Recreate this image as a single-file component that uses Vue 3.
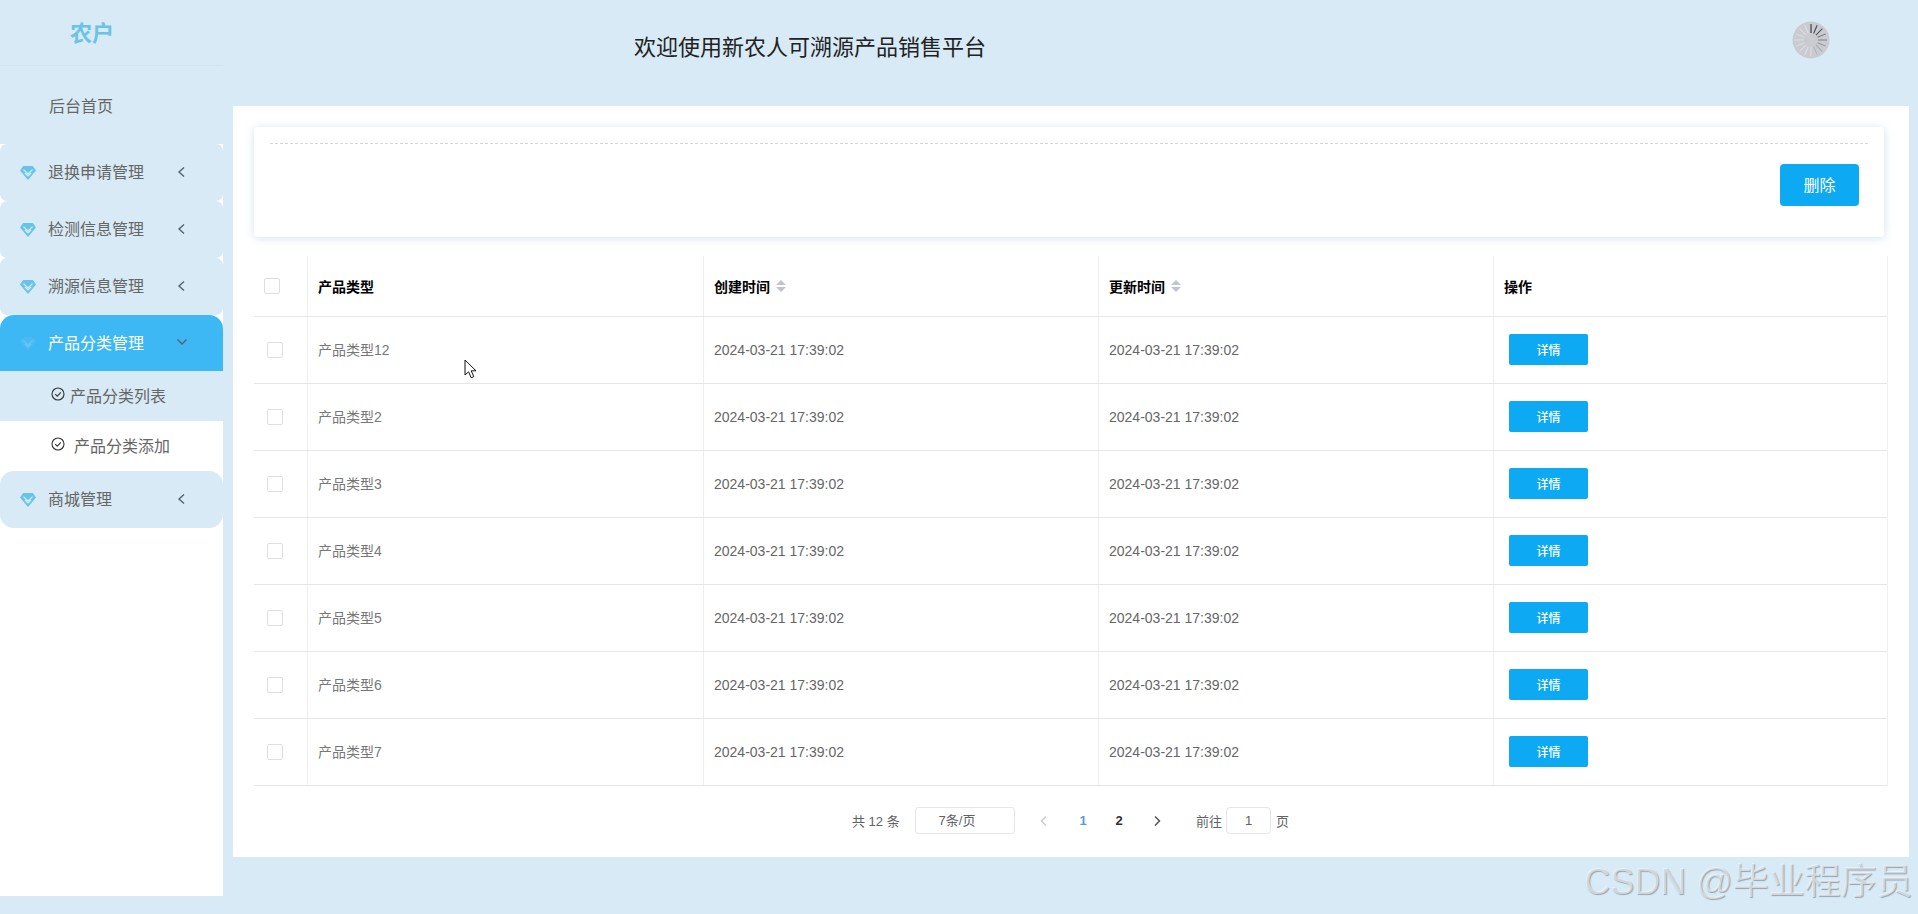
<template>
  <div class="page">
    <aside class="sidebar">
      <div class="logo">农户</div>
      <div class="home">后台首页</div>
      <ul class="menu">
        <template v-for="item in menus" :key="item.name">
          <li class="menu-item" :class="{ active: item.open }">
            <svg class="gem" viewBox="0 0 16 15">
              <path d="M3.2 1h9.6L16 5.6 8 15 0 5.6z" fill="#66c4e6" />
              <path d="M3.4 4.6L8 9l4.6-4.4M5 8l3 3 3-3" fill="none" stroke="#d7eaf6" stroke-width="1.2" />
            </svg>
            <span class="menu-name">{{ item.name }}</span>
            <svg class="arrow" viewBox="0 0 12 12">
              <path :d="item.open ? 'M1.5 3.5L6 8l4.5-4.5' : 'M8 1.5L3 6l5 4.5'" fill="none" stroke="#55606e" stroke-width="1.4" />
            </svg>
          </li>
          <template v-if="item.open">
            <li class="sub-item current">
              <svg class="check" viewBox="0 0 14 14">
                <circle cx="7" cy="7" r="6" fill="none" stroke="#333" stroke-width="1.1" />
                <path d="M4.2 7.2l2.1 2 3.5-3.8" fill="none" stroke="#333" stroke-width="1.1" />
              </svg>
              <span class="sub-name">产品分类列表</span>
            </li>
            <li class="sub-item">
              <svg class="check" viewBox="0 0 14 14">
                <circle cx="7" cy="7" r="6" fill="none" stroke="#333" stroke-width="1.1" />
                <path d="M4.2 7.2l2.1 2 3.5-3.8" fill="none" stroke="#333" stroke-width="1.1" />
              </svg>
              <span class="sub-name add-name">产品分类添加</span>
            </li>
          </template>
        </template>
      </ul>
    </aside>

    <main class="main">
      <header class="top">
        <h1 class="title">欢迎使用新农人可溯源产品销售平台</h1>
        <svg class="avatar" viewBox="0 0 38 38">
          <circle cx="19" cy="19" r="18.5" fill="#c9cbd0" />
          <line v-for="t in ticks" :key="t.deg" x1="19" y1="3" x2="19" y2="12"
            :stroke="t.color" stroke-width="1" :transform="`rotate(${t.deg} 19 19)`" />
        </svg>
      </header>

      <section class="panel">
        <div class="card">
          <div class="dash"></div>
          <div class="card-actions">
            <button class="del-btn">删除</button>
          </div>
        </div>

        <div class="table">
          <div class="row head">
            <div class="cell box-cell"><span class="box"></span></div>
            <div class="cell">产品类型</div>
            <div class="cell">创建时间<span class="sort"><i class="up"></i><i class="down"></i></span></div>
            <div class="cell">更新时间<span class="sort"><i class="up"></i><i class="down"></i></span></div>
            <div class="cell">操作</div>
          </div>
          <div class="row" v-for="name in rows" :key="name">
            <div class="cell box-cell"><span class="box"></span></div>
            <div class="cell name-cell">{{ name }}</div>
            <div class="cell">2024-03-21 17:39:02</div>
            <div class="cell">2024-03-21 17:39:02</div>
            <div class="cell"><button class="detail-btn">详情</button></div>
          </div>
        </div>

        <div class="pager">
          <span class="total">共 12 条</span>
          <span class="size">7条/页</span>
          <svg class="page-arrow prev" viewBox="0 0 10 12"><path d="M7 1.5L2.5 6 7 10.5" fill="none" stroke="#c8ccd2" stroke-width="1.5" /></svg>
          <span class="num on">1</span>
          <span class="num">2</span>
          <svg class="page-arrow next" viewBox="0 0 10 12"><path d="M3 1.5L7.5 6 3 10.5" fill="none" stroke="#555" stroke-width="1.5" /></svg>
          <span class="goto">前往</span>
          <span class="jump">1</span>
          <span class="unit">页</span>
        </div>
      </section>
    </main>

    <svg class="cursor" viewBox="0 0 13 20">
      <path d="M1 1v15l3.6-3.2 2.6 6 2.6-1.2-2.6-5.8h4.8z" fill="#fff" stroke="#111" stroke-width="1" />
    </svg>
    <div class="watermark">CSDN @毕业程序员</div>
  </div>
</template>

<script setup>
const menus = [
  { name: '退换申请管理' },
  { name: '检测信息管理' },
  { name: '溯源信息管理' },
  { name: '产品分类管理', open: true },
  { name: '商城管理' }
]

const rows = ['产品类型12', '产品类型2', '产品类型3', '产品类型4', '产品类型5', '产品类型6', '产品类型7']

const shades = ['#23272e', '#3a3f48', '#4a4f58', '#6f747c', '#7c8088', '#8f9399', '#a5a8ad', '#b4b6ba']
const ticks = Array.from({ length: 16 }, (_, i) => ({
  deg: i * 22.5,
  color: shades[i] || '#dcdee2'
}))
</script>

<style>
html,
body {
  margin: 0;
  background: #d7eaf6;
}
</style>

<style scoped>
.page {
  position: relative;
  display: flex;
  width: 1918px;
  height: 914px;
  overflow: hidden;
  background: #d7eaf6;
  font-family: "Liberation Sans", "Noto Sans CJK SC", sans-serif;
  color: #666;
}

.sidebar {
  display: flex;
  flex-direction: column;
  width: 223px;
  height: 896px;
  background: #fff;
}

.logo {
  height: 66px;
  line-height: 67px;
  padding-right: 39px;
  text-align: center;
  font-size: 22px;
  font-weight: 700;
  color: #6cc3e4;
  background: #d7eaf6;
  border-bottom: 1px solid #d2e6f2;
  box-sizing: border-box;
}

.home {
  height: 78px;
  line-height: 82px;
  padding-left: 49px;
  font-size: 16px;
  background: #d7eaf6;
}

.menu {
  margin: 0;
  padding: 0;
  list-style: none;
}

.menu-item {
  display: flex;
  align-items: center;
  height: 57px;
  padding-left: 20px;
  font-size: 16px;
  background: #d7eaf6;
  border-radius: 7px;
  box-sizing: border-box;
}

.menu-item:last-child {
  border-radius: 14px;
}

.menu-item.active {
  height: 56px;
  color: #fff;
  background: #3db8f5;
  border-radius: 14px 14px 0 0;
}

.gem {
  width: 16px;
  height: 15px;
  margin-right: 12px;
}

.active .gem {
  opacity: 0.3;
}

.menu-name {
  width: 128px;
  padding-bottom: 3px;
}

.arrow {
  width: 12px;
  height: 12px;
  margin-top: -2px;
}

.sub-item {
  display: flex;
  align-items: center;
  height: 50px;
  padding-left: 51px;
  font-size: 16px;
  background: #fff;
  box-sizing: border-box;
}

.sub-item.current {
  background: #d7eaf6;
}

.sub-name {
  padding-bottom: 2px;
}

.check {
  width: 14px;
  height: 14px;
  margin-right: 5px;
  margin-top: -4px;
}

.add-name {
  margin-left: 4px;
}

.main {
  flex: 1;
  min-width: 0;
}

.top {
  display: flex;
  align-items: center;
  height: 106px;
  padding-bottom: 16px;
  box-sizing: border-box;
}

.title {
  margin: 0 0 0 411px;
  font-size: 22px;
  font-weight: 400;
  color: #222;
  white-space: nowrap;
}

.avatar {
  width: 38px;
  height: 38px;
  margin-left: 806px;
  margin-top: -10px;
}

.panel {
  width: 1676px;
  height: 751px;
  margin-left: 10px;
  padding: 21px 21px 0;
  background: #fff;
  box-sizing: border-box;
}

.card {
  width: 1630px;
  height: 110px;
  padding: 16px 16px 0;
  border-radius: 4px;
  background: #fff;
  box-shadow: 0 1px 8px rgba(130, 170, 195, 0.35);
  box-sizing: border-box;
}

.dash {
  border-top: 1px dashed #d4d6da;
}

.card-actions {
  display: flex;
  justify-content: flex-end;
  padding: 20px 9px 0 0;
}

.del-btn {
  width: 79px;
  height: 42px;
  padding: 0 0 3px;
  border: 0;
  border-radius: 4px;
  background: #0ea9f3;
  color: #fff;
  font-family: inherit;
  font-size: 16px;
}

.table {
  width: 1634px;
  margin-top: 19px;
  border-right: 1px solid #eef0f3;
  box-sizing: border-box;
}

.row {
  display: grid;
  grid-template-columns: 54px 396px 395px 395px 1fr;
  height: 67px;
  border-bottom: 1px solid #e4e6ea;
  box-sizing: border-box;
}

.row.head {
  height: 61px;
  font-weight: 700;
  color: #000;
}

.cell {
  display: flex;
  align-items: center;
  padding-left: 10px;
  font-size: 14px;
  border-right: 1px solid #eceef1;
  box-sizing: border-box;
}

.cell:last-child {
  border-right: 0;
}

.name-cell {
  padding-bottom: 2px;
  color: #777;
}

.box-cell {
  padding-left: 13px;
}

.head .box-cell {
  padding-left: 10px;
}

.box {
  width: 14px;
  height: 14px;
  border: 1px solid #dcdfe4;
  border-radius: 2px;
}

.sort {
  display: flex;
  flex-direction: column;
  gap: 2px;
  margin-left: 6px;
}

.sort i {
  width: 0;
  height: 0;
  border-left: 5px solid transparent;
  border-right: 5px solid transparent;
}

.sort .up {
  border-bottom: 5px solid #c0c4cc;
}

.sort .down {
  border-top: 5px solid #c0c4cc;
}

.detail-btn {
  width: 79px;
  height: 31px;
  margin: -2px 0 0 5px;
  padding: 0;
  border: 0;
  border-radius: 2px;
  background: #0ea9f3;
  color: #fff;
  font-family: inherit;
  font-size: 12px;
  font-weight: 500;
}

.pager {
  display: flex;
  align-items: center;
  height: 27px;
  margin-top: 21px;
  padding-left: 598px;
  font-size: 13px;
  color: #606266;
}

.total {
  width: 63px;
}

.size,
.jump {
  height: 27px;
  line-height: 25px;
  border: 1px solid #e4e6ea;
  border-radius: 3px;
  text-align: center;
  box-sizing: border-box;
}

.size {
  width: 100px;
  padding-right: 16px;
}

.page-arrow {
  width: 10px;
  height: 12px;
}

.prev {
  margin-left: 24px;
}

.num {
  width: 36px;
  text-align: center;
  font-weight: 700;
  color: #303133;
}

.num.on {
  margin-left: 16px;
  color: #5b9bd9;
}

.next {
  margin-left: 15px;
}

.goto {
  margin-left: 34px;
}

.jump {
  width: 45px;
  margin-left: 4px;
  border-radius: 4px;
}

.unit {
  margin-left: 5px;
}

.cursor {
  position: absolute;
  left: 464px;
  top: 359px;
  width: 13px;
  height: 20px;
}

.watermark {
  position: absolute;
  left: 1584px;
  top: 860px;
  font-size: 36px;
  line-height: 44px;
  color: rgba(255, 255, 255, 0.55);
  text-shadow: 1px 1px 1px rgba(110, 120, 130, 0.6);
  white-space: nowrap;
}
</style>
